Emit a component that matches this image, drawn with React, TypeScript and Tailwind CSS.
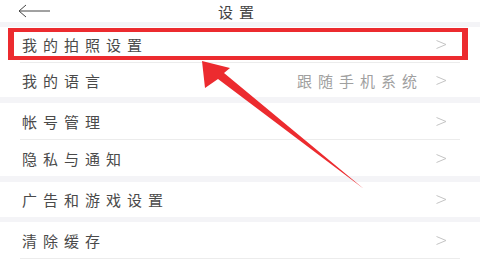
import React from "react";

const font = { fontFamily: '"Noto Sans CJK SC", "Noto Sans", sans-serif' };

function Chevron() {
  return (
    <svg width="11" height="9" viewBox="0 0 11 9" className="shrink-0">
      <polyline points="0.5,0.5 10,4.5 0.5,8.5" fill="none" stroke="#c4c4c4" strokeWidth="1" />
    </svg>
  );
}

function Row({ label, value, h }: { label: string; value?: string; h: string }) {
  return (
    <div className={`flex items-center justify-between pl-[22px] pr-[33px] bg-white ${h}`}>
      <span className="text-[15px] tracking-[6px] text-[#4a4a4a] leading-none">{label}</span>
      <div className="flex items-center gap-[13px]">
        {value && <span className="text-[15px] tracking-[6px] text-[#a0a0a0] leading-none">{value}</span>}
        <Chevron />
      </div>
    </div>
  );
}

const Divider = () => <div className="h-px bg-[#ececec] mx-[20px]" />;
const Band = ({ h }: { h: string }) => <div className={`bg-[#f4f4f7] ${h}`} />;

export default function App() {
  return (
    <div className="relative w-[480px] h-[270px] overflow-hidden bg-white" style={font}>
      <div className="flex items-center h-[22px] relative">
        <svg width="34" height="14" viewBox="0 0 34 14" className="ml-[17px]">
          <polyline points="9,1 2,7 9,13" fill="none" stroke="#444" strokeWidth="1" />
          <line x1="2" y1="7" x2="33" y2="7" stroke="#444" strokeWidth="1" />
        </svg>
        <span className="absolute left-[218px] top-[4px] text-[15px] tracking-[6px] text-[#444] leading-none">设置</span>
      </div>
      <Band h="h-[5px]" />
      <Row label="我的拍照设置" h="h-[35px]" />
      <Divider />
      <Row label="我的语言" value="跟随手机系统" h="h-[34px]" />
      <Band h="h-[6px]" />
      <Row label="帐号管理" h="h-[36px]" />
      <Divider />
      <Row label="隐私与通知" h="h-[36px]" />
      <Band h="h-[6px]" />
      <Row label="广告和游戏设置" h="h-[35px]" />
      <Band h="h-[5px]" />
      <Row label="清除缓存" h="h-[36px]" />
      <Divider />
      <Row label="" h="h-[36px]" />

      <div className="absolute left-[8px] top-[28px] w-[460px] h-[32px] border-x-[6px] border-y-[4px] border-[#ec2b2f]" />
      <svg className="absolute left-0 top-0" width="480" height="270" viewBox="0 0 480 270">
        <polygon
          points="202,61 230,68 224,73 364,189 218,79 205,88"
          fill="#ec2b2f"
        />
      </svg>
    </div>
  );
}
